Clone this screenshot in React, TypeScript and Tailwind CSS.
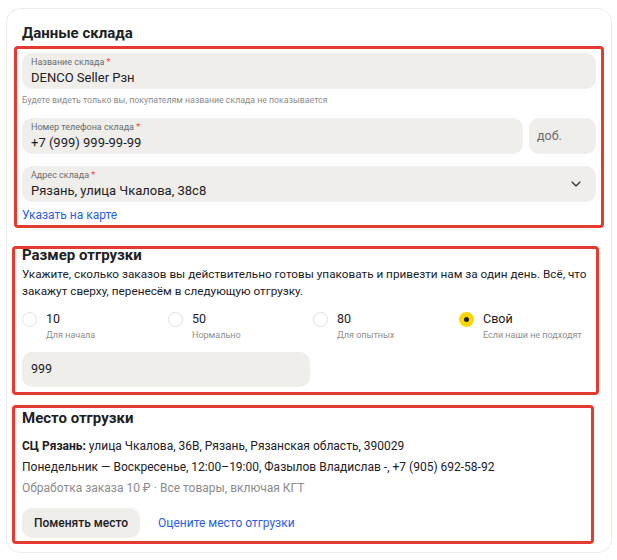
import { ChevronDown } from 'lucide-react';

const font = { fontFamily: 'Roboto, "Noto Sans", sans-serif' };

function Field({ label, value, className = '', chevron = false }: { label: string; value: string; className?: string; chevron?: boolean }) {
  return (
    <div className={`flex h-[36px] items-center rounded-[10px] bg-[#efeeeb] pl-[9px] pr-[12px] ${className}`}>
      <div className="flex min-w-0 flex-1 flex-col">
        <span className="text-[9px] leading-[11px] text-[#6b6b6b]">
          {label} <span className="text-[#ff3b30]">*</span>
        </span>
        <span className="mt-[2px] text-[13px] leading-[15px] text-[#21201f]">{value}</span>
      </div>
      {chevron && <ChevronDown className="h-[16px] w-[16px] text-[#21201f]" strokeWidth={1.6} />}
    </div>
  );
}

function Radio({ value, hint, checked = false }: { value: string; hint: string; checked?: boolean }) {
  return (
    <div className="flex items-start gap-[9px]">
      {checked ? (
        <span className="mt-[2px] flex h-[15px] w-[15px] items-center justify-center rounded-full bg-[#fcd600]">
          <span className="h-[5px] w-[5px] rounded-full bg-[#21201f]" />
        </span>
      ) : (
        <span className="mt-[2px] h-[15px] w-[15px] rounded-full border border-[#e2e2e2] bg-white" />
      )}
      <div className="flex flex-col">
        <span className="text-[12.5px] leading-[17px] text-[#21201f]">{value}</span>
        <span className="mt-[2px] text-[9px] leading-[12px] text-[#8f8f8f]">{hint}</span>
      </div>
    </div>
  );
}

export default function App() {
  return (
    <div className="h-[560px] w-[617px] bg-white pl-[6px] pt-[8px]" style={font}>
      <div className="h-[545px] w-[606px] rounded-[14px] border border-[#ebebeb] bg-white pt-[12px]">
        <h2 className="ml-[15px] text-[15px] font-bold leading-[24px] text-[#21201f]">Данные склада</h2>

        <section className="ml-[7px] mr-[7px] mt-[1px] rounded-[4px] border-[3px] border-[#e53a2f] px-[5px] pb-[2px] pt-[4px]">
          <Field label="Название склада" value="DENCO Seller Рзн" />
          <p className="mt-[4px] text-[8.75px] leading-[14px] text-[#8c8c8c]">
            Будете видеть только вы, покупателям название склада не показывается
          </p>
          <div className="mt-[11px] flex gap-[6px]">
            <Field label="Номер телефона склада" value="+7 (999) 999-99-99" className="flex-1" />
            <div className="flex h-[36px] w-[67px] items-center rounded-[10px] bg-[#efeeeb] pl-[8px] text-[12.5px] text-[#6b6b6b]">
              доб.
            </div>
          </div>
          <Field label="Адрес склада" value="Рязань, улица Чкалова, 38с8" className="mt-[12px]" chevron />
          <a className="mt-[5px] block text-[12px] leading-[16px] text-[#2b5de8]">Указать на карте</a>
        </section>

        <section className="ml-[5px] mr-[12px] mt-[18px] rounded-[4px] border-[3px] border-[#e53a2f] pb-[5px] pl-[7px] pr-[6px]">
          <h2 className="-mt-[3px] text-[15px] font-bold leading-[18px] text-[#21201f]">Размер отгрузки</h2>
          <p className="mt-[2px] whitespace-nowrap text-[11.75px] leading-[17px] text-[#21201f]">
            Укажите, сколько заказов вы действительно готовы упаковать и привезти нам за один день. Всё, что
            <br />
            закажут сверху, перенесём в следующую отгрузку.
          </p>
          <div className="mt-[10px] grid grid-cols-[146px_145px_146px_1fr]">
            <Radio value="10" hint="Для начала" />
            <Radio value="50" hint="Нормально" />
            <Radio value="80" hint="Для опытных" />
            <Radio value="Свой" hint="Если наши не подходят" checked />
          </div>
          <div className="mt-[11px] flex h-[35px] w-[288px] items-center rounded-[10px] bg-[#efeeeb] pl-[9px] text-[12.5px] text-[#21201f]">
            999
          </div>
        </section>

        <section className="ml-[5px] mr-[17px] mt-[10px] rounded-[4px] border-[3px] border-[#e53a2f] pb-[3px] pl-[7px]">
          <h2 className="text-[15px] font-bold leading-[20px] text-[#21201f]">Место отгрузки</h2>
          <div className="mt-[8px] text-[12px] leading-[21px] text-[#21201f]">
            <p>
              <b className="font-bold">СЦ Рязань:</b> улица Чкалова, 36В, Рязань, Рязанская область, 390029
            </p>
            <p>Понедельник — Воскресенье, 12:00–19:00, Фазылов Владислав -, +7 (905) 692-58-92</p>
            <p className="text-[#8c8c8c]">Обработка заказа 10 ₽ · Все товары, включая КГТ</p>
          </div>
          <div className="mt-[9px] flex items-center gap-[18px]">
            <button className="h-[30px] rounded-[10px] bg-[#efeeeb] px-[12px] text-[12px] font-medium text-[#21201f]">
              Поменять место
            </button>
            <a className="text-[12px] text-[#2b5de8]">Оцените место отгрузки</a>
          </div>
        </section>
      </div>
    </div>
  );
}
